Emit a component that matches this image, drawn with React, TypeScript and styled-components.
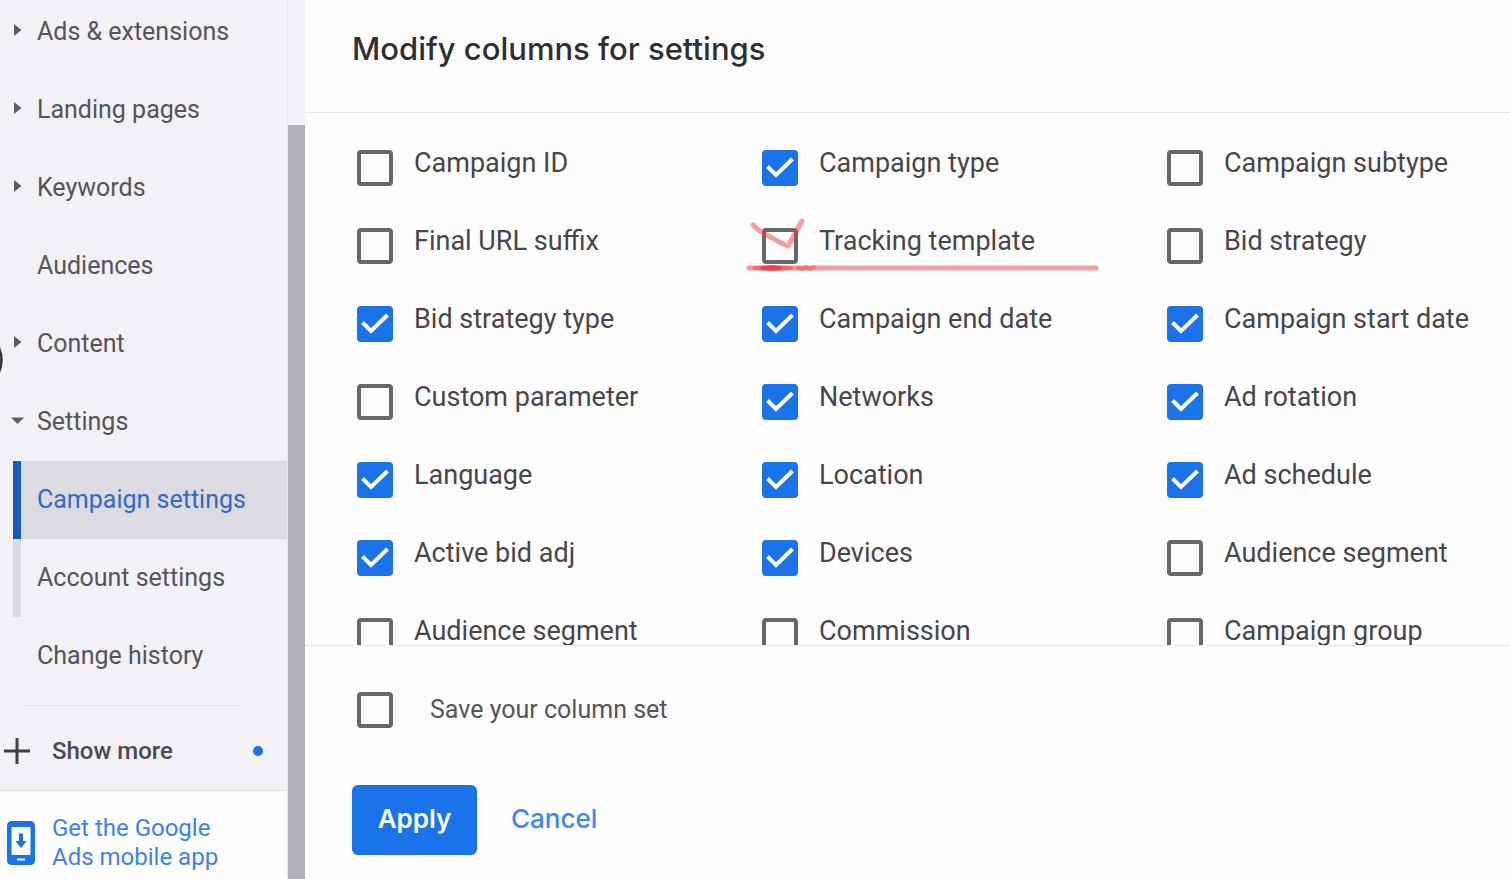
import React from 'react';
import styled, { createGlobalStyle, css } from 'styled-components';

const GlobalStyle = createGlobalStyle`
  * { box-sizing: border-box; }
  body { margin: 0; background: #fefdfe; font-family: Roboto, "Liberation Sans", sans-serif; }
`;

const Page = styled.div`
  display: flex;
  height: 100vh;
  overflow: hidden;
`;

const Sidebar = styled.aside`
  position: relative;
  display: flex;
  flex-direction: column;
  flex: 0 0 288px;
  overflow: hidden;
  background: #f2f1f6;
  border-right: 1px solid #e6e5ea;
`;

const NavList = styled.ul`
  list-style: none;
  margin: -7px 0 0;
  padding: 0;
`;

const NavItem = styled.li<{ $sub?: boolean; $active?: boolean }>`
  ${(p) =>
    p.$sub &&
    css`
      margin-left: 13px;
      border-left: 8px solid ${p.$active ? '#185abc' : '#dcdbe0'};
    `}
  background: ${(p) => (p.$active ? '#dcdbe0' : 'transparent')};
`;

const NavLink = styled.a<{ $sub?: boolean; $active?: boolean }>`
  display: flex;
  align-items: center;
  height: 78px;
  padding-left: ${(p) => (p.$sub ? '16px' : '10px')};
  font-size: 25px;
  line-height: 32px;
  color: ${(p) => (p.$active ? '#3068cb' : '#55545a')};
  text-decoration: none;
  white-space: nowrap;
`;

const ArrowSlot = styled.span`
  display: flex;
  flex: 0 0 27px;
  height: 18px;
  align-items: flex-start;

  svg { display: block; }
`;

const Divider = styled.hr`
  width: 222px;
  margin: 10px 0 0 20px;
  border: 0;
  border-top: 1px solid #e3e2e7;
`;

const ShowMore = styled.button`
  display: flex;
  flex: 1;
  align-items: center;
  min-height: 80px;
  padding: 6px 24px 0 3px;
  border: 0;
  background: none;
  color: #4a494e;
  font: 500 24px/32px Roboto, sans-serif;
  text-align: left;
`;

const ShowMoreText = styled.span`
  flex: 1;
  padding-left: 21px;
`;

const Dot = styled.span`
  width: 10px;
  height: 10px;
  border-radius: 50%;
  background: #1a73e8;
`;

const AppPromo = styled.a`
  display: flex;
  align-items: center;
  flex: 0 0 89px;
  padding: 16px 0 0 6px;
  gap: 16px;
  border-top: 1px solid #dddce1;
  background: #fefdfe;
  color: #3b82f6;
  font-size: 24px;
  line-height: 29px;
  text-decoration: none;
`;

const EdgeMark = styled.svg`
  position: absolute;
  left: 0;
  top: 344px;
`;

const ScrollTrack = styled.div`
  flex: 0 0 17px;
  display: flex;
  padding-top: 125px;
  background: #f2f1f6;
`;

const ScrollThumb = styled.div`
  flex: 1;
  background: #b2b1b6;
`;

const Panel = styled.main`
  display: flex;
  flex: 1;
  flex-direction: column;
  min-width: 0;
`;

const PanelHeader = styled.header`
  display: flex;
  align-items: center;
  flex: 0 0 113px;
  padding: 0 48px 14px 47px;
  border-bottom: 1px solid #e6e5e8;
`;

const Title = styled.h1`
  margin: 0;
  font: 500 31px/40px Inter, sans-serif;
  color: #2f2e32;
`;

const ColumnArea = styled.div`
  flex: 1;
  min-height: 0;
  overflow: hidden;
  padding: 37px 24px 0 52px;
`;

const ColumnGrid = styled.div`
  display: grid;
  grid-template-columns: repeat(3, minmax(0, 1fr));
  grid-auto-rows: 78px;
  column-gap: 86px;
`;

const Option = styled.label`
  position: relative;
  display: flex;
  align-items: flex-start;
  gap: 21px;
  color: #47464b;
  font-size: 27px;
  white-space: nowrap;
`;

const OptionText = styled.span`
  line-height: 26px;
`;

const CheckWrap = styled.span`
  position: relative;
  display: block;
  flex: 0 0 36px;
  height: 36px;
`;

const CheckInput = styled.input`
  display: block;
  appearance: none;
  width: 36px;
  height: 36px;
  margin: 0;
  border: 4px solid #67666b;
  border-radius: 4px;
  background: transparent;

  &:checked {
    border-color: #1a73e8;
    background: #1a73e8;
  }

  &:checked + svg { display: block; }
`;

const CheckMark = styled.svg`
  display: none;
  position: absolute;
  inset: 0;
  pointer-events: none;
`;

const Scribble = styled.svg`
  position: absolute;
  left: -20px;
  top: -14px;
  pointer-events: none;
`;

const Footer = styled.footer`
  flex: 0 0 234px;
  padding: 46px 52px 0 47px;
  border-top: 1px solid #e6e5e8;
`;

const SaveOption = styled.label`
  display: flex;
  align-items: center;
  gap: 37px;
  padding-left: 5px;
  color: #55545a;
  font-size: 25px;
  line-height: 36px;
`;

const Actions = styled.div`
  display: flex;
  align-items: center;
  gap: 34px;
  margin-top: 57px;
`;

const ApplyButton = styled.button`
  width: 125px;
  height: 70px;
  padding: 0 0 2px;
  border: 0;
  border-radius: 6px;
  background: #1a73e8;
  color: #fff;
  font: 600 26px/32px Inter, sans-serif;
`;

const CancelButton = styled.button`
  padding: 0 0 2px;
  border: 0;
  background: none;
  color: #3f86f8;
  font: 500 26px/32px Inter, sans-serif;
`;

type Nav = { label: string; arrow?: 'right' | 'down'; sub?: boolean; active?: boolean };

const navItems: Nav[] = [
  { label: 'Ads & extensions', arrow: 'right' },
  { label: 'Landing pages', arrow: 'right' },
  { label: 'Keywords', arrow: 'right' },
  { label: 'Audiences' },
  { label: 'Content', arrow: 'right' },
  { label: 'Settings', arrow: 'down' },
  { label: 'Campaign settings', sub: true, active: true },
  { label: 'Account settings', sub: true },
  { label: 'Change history' },
];

type Column = { label: string; checked?: boolean; marked?: boolean };

const columns: Column[] = [
  { label: 'Campaign ID' },
  { label: 'Campaign type', checked: true },
  { label: 'Campaign subtype' },
  { label: 'Final URL suffix' },
  { label: 'Tracking template', marked: true },
  { label: 'Bid strategy' },
  { label: 'Bid strategy type', checked: true },
  { label: 'Campaign end date', checked: true },
  { label: 'Campaign start date', checked: true },
  { label: 'Custom parameter' },
  { label: 'Networks', checked: true },
  { label: 'Ad rotation', checked: true },
  { label: 'Language', checked: true },
  { label: 'Location', checked: true },
  { label: 'Ad schedule', checked: true },
  { label: 'Active bid adj', checked: true },
  { label: 'Devices', checked: true },
  { label: 'Audience segment' },
  { label: 'Audience segment' },
  { label: 'Commission' },
  { label: 'Campaign group' },
];

function Arrow({ direction }: { direction?: 'right' | 'down' }) {
  return (
    <ArrowSlot>
      {direction && (
        <svg width="14" height="16" viewBox="0 0 14 16" aria-hidden="true">
          <path d={direction === 'right' ? 'M4 1 L11.5 7 L4 13Z' : 'M1 4.5 H14 L7.5 11Z'} fill="#5d5c62" />
        </svg>
      )}
    </ArrowSlot>
  );
}

function Checkbox({ checked }: { checked?: boolean }) {
  return (
    <CheckWrap>
      <CheckInput type="checkbox" defaultChecked={checked} />
      <CheckMark width="36" height="36" viewBox="0 0 36 36" aria-hidden="true">
        <path d="M5.5 16.5 L14 25 L30.5 9" fill="none" stroke="#fff" strokeWidth="4" />
      </CheckMark>
    </CheckWrap>
  );
}

function RedPen() {
  return (
    <Scribble width="362" height="62" viewBox="0 0 362 62" aria-hidden="true">
      <g fill="none" stroke="#f0333b" strokeLinecap="round" strokeLinejoin="round">
        <path d="M11 11 Q18 18 27 22 Q36 28 46 32 Q52 22 60 7" strokeWidth="5" opacity="0.48" />
        <path d="M7 54 H354" strokeWidth="5" opacity="0.48" />
        <path d="M12 54 Q28 51 50 54 Q28 57 12 54" strokeWidth="3" opacity="0.5" />
        <path d="M20 54 Q28 52 38 54 Q28 56 20 54" strokeWidth="3" opacity="0.8" />
        <path d="M56 54 L60 55 L64 53 L68 55 L72 53" strokeWidth="4" opacity="0.4" />
      </g>
    </Scribble>
  );
}

export default function App() {
  return (
    <Page>
      <GlobalStyle />
      <Sidebar>
        <nav>
          <NavList>
            {navItems.map((item) => (
              <NavItem key={item.label} $sub={item.sub} $active={item.active}>
                <NavLink href="#" $sub={item.sub} $active={item.active}>
                  {!item.sub && <Arrow direction={item.arrow} />}
                  {item.label}
                </NavLink>
              </NavItem>
            ))}
          </NavList>
        </nav>
        <Divider />
        <ShowMore type="button">
          <svg width="28" height="32" viewBox="0 0 28 32" aria-hidden="true">
            <path d="M14 3 V29 M1 16 H27" stroke="#3f3e43" strokeWidth="3" />
          </svg>
          <ShowMoreText>Show more</ShowMoreText>
          <Dot />
        </ShowMore>
        <AppPromo href="#">
          <svg width="30" height="46" viewBox="0 0 30 46" aria-hidden="true">
            <path
              fillRule="evenodd"
              fill="#1a73e8"
              d="M6 1 H24 Q29 1 29 6 V40 Q29 45 24 45 H6 Q1 45 1 40 V6 Q1 1 6 1Z M5.5 7 V35 H24.5 V7Z M11 38.5 V40.5 H19 V38.5Z"
            />
            <path d="M13 13.5 H17 V21 H20.5 L15 28 L9.5 21 H13Z" fill="#1a73e8" />
          </svg>
          <span>
            Get the Google
            <br />
            Ads mobile app
          </span>
        </AppPromo>
        <EdgeMark width="5" height="32" viewBox="0 0 5 32" aria-hidden="true">
          <path d="M0 3 Q5.5 16 0 29" fill="#37363a" />
        </EdgeMark>
      </Sidebar>
      <ScrollTrack aria-hidden="true">
        <ScrollThumb />
      </ScrollTrack>
      <Panel>
        <PanelHeader>
          <Title>Modify columns for settings</Title>
        </PanelHeader>
        <ColumnArea>
          <ColumnGrid>
            {columns.map((column, index) => (
              <Option key={index}>
                <Checkbox checked={column.checked} />
                <OptionText>{column.label}</OptionText>
                {column.marked && <RedPen />}
              </Option>
            ))}
          </ColumnGrid>
        </ColumnArea>
        <Footer>
          <SaveOption>
            <Checkbox />
            <span>Save your column set</span>
          </SaveOption>
          <Actions>
            <ApplyButton type="button">Apply</ApplyButton>
            <CancelButton type="button">Cancel</CancelButton>
          </Actions>
        </Footer>
      </Panel>
    </Page>
  );
}
